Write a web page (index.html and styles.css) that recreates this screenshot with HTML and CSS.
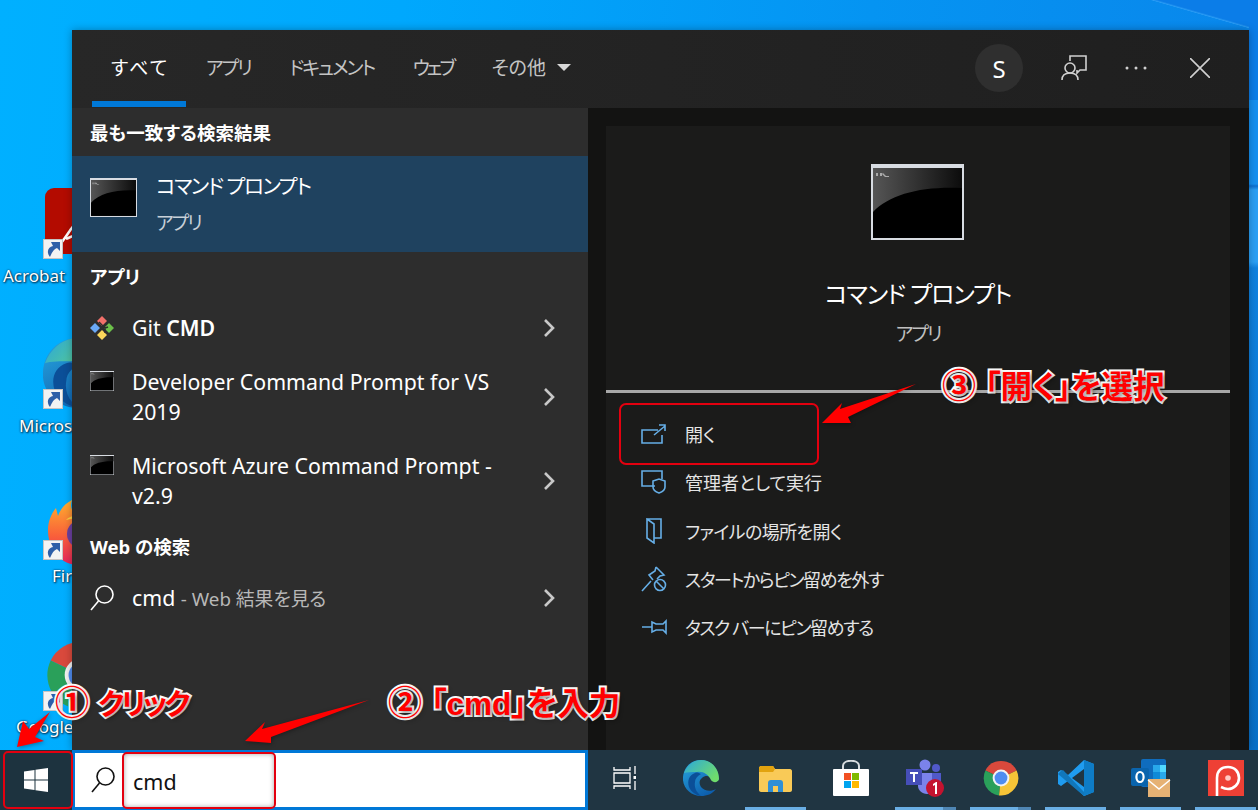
FILE: index.html

```html
<!DOCTYPE html>
<html lang="ja">
<head>
  <meta charset="UTF-8" />
  <title>コマンド プロンプトの開き方</title>
  <meta name="viewport" content="width=device-width, initial-scale=1.0" />
  <link rel="stylesheet" href="styles.css">
</head>
<body>

<svg class="sprites" aria-hidden="true">
  <defs>
    <linearGradient id="cmdShine" x1="0" y1="0" x2="1" y2="0">
      <stop offset="0" stop-color="#565656" />
      <stop offset="1" stop-color="#0c0c0c" />
    </linearGradient>
    <linearGradient id="edgeBlue" x1="0" y1="0" x2="0.6" y2="1">
      <stop offset="0" stop-color="#29a8e0" />
      <stop offset="1" stop-color="#0d5fae" />
    </linearGradient>
    <linearGradient id="edgeTop" x1="0" y1="0" x2="1" y2="0.6">
      <stop offset="0" stop-color="#2aa7dd" />
      <stop offset="1" stop-color="#6fdc6c" />
    </linearGradient>
    <linearGradient id="foxBody" x1="0" y1="0" x2="0" y2="1">
      <stop offset="0" stop-color="#ffb02e" />
      <stop offset="0.55" stop-color="#f9603a" />
      <stop offset="1" stop-color="#e5225c" />
    </linearGradient>
    <symbol id="cmd" viewBox="0 0 93 76" preserveAspectRatio="none">
      <rect width="93" height="76" fill="#d8dce2" />
      <rect x="2" y="4" width="89" height="70" fill="#000" />
      <path d="M2 4h89v20c-40-2-72 6-89 24z" fill="url(#cmdShine)" />
      <path d="M5 9h2v3H5zM9 9h2v3H9zM12 9l3 3h3v1h-4l-3-3z" fill="#aaa" />
    </symbol>
    <symbol id="edge" viewBox="0 0 36 36">
      <path d="M18 0C8 0 1 7 0 17c-1 11 8 19 18 19 6 0 11-2 15-7-5 3-12 2-15-2-2-3-2-7 1-9 3-3 8-2 10 0 2 1 2 3 7 2 0-11-8-20-18-20z" fill="url(#edgeBlue)" />
      <path d="M1 13C4 5 11 0 18 0c10 0 18 8 18 19-1 4-6 4-8 1-3-6-8-9-14-8-5 0-10 0-13 1z" fill="url(#edgeTop)" />
      <path d="M12 13c-6 2-8 8-6 14 2 5 7 8 12 9-5-4-7-9-6-14 0-3 2-6 6-8-2-1-4-2-6-1z" fill="#0b4f98" />
    </symbol>
    <symbol id="chrome" viewBox="0 0 36 36">
      <path d="M18 18L33.6 10.5A17.5 17.5 0 0 0 2.4 10.5z" fill="#d9493c" />
      <path d="M18 18L2.4 10.5A17.5 17.5 0 0 0 16 35.4z" fill="#2aa05a" />
      <path d="M18 18L16 35.4A17.5 17.5 0 0 0 33.6 10.5z" fill="#f6c437" />
      <circle cx="18" cy="18" r="8.4" fill="#f2f2f2" />
      <circle cx="18" cy="18" r="6.4" fill="#4f8cf0" />
    </symbol>
    <symbol id="shortcut" viewBox="0 0 20 20">
      <rect x="0.5" y="0.5" width="19" height="19" fill="#f3f3f3" stroke="#c4c4c4" />
      <path d="M7 18C3 13 5 8 10 7L8 3h9v9l-3-3c-3 1-5 4-7 9z" fill="#2d5fa8" />
    </symbol>
  </defs>
</svg>

<div class="desktop">
  <div class="wall-streak"></div>
  <div class="edge-strip"></div>

  <!-- shortcuts sit under the search window -->
  <div class="shortcut shortcut-acrobat">
    <svg class="app-art" viewBox="0 0 70 66"><rect width="70" height="66" rx="9" fill="#b30b00" /><path d="M10 62c6-6 10-12 14-18 3-4 4-8 10-8 4 0 3 5-1 9-4 3-8 4-12 6" fill="none" stroke="#fff" stroke-width="2.5" /></svg>
    <svg class="arrow-badge"><use href="#shortcut" /></svg>
    <span class="shortcut-label">Acrobat</span>
  </div>
  <div class="shortcut shortcut-edge">
    <svg class="app-art"><use href="#edge" /></svg>
    <svg class="arrow-badge"><use href="#shortcut" /></svg>
    <span class="shortcut-label">Micros</span>
  </div>
  <div class="shortcut shortcut-firefox">
    <svg class="app-art" viewBox="0 0 70 70"><path d="M0 30C0 22 3 14 8 8l2 8c2-6 6-12 14-16-2 6-1 10 3 13 18-2 33 10 33 28 0 14-12 24-30 24C12 65 0 48 0 30z" fill="url(#foxBody)" /><circle cx="33" cy="34" r="14" fill="#6b3fa0" /><path d="M18 20c6-6 18-7 24-2-8-1-16 0-24 2z" fill="#ffd23e" /></svg>
    <svg class="arrow-badge"><use href="#shortcut" /></svg>
    <span class="shortcut-label">Fir</span>
  </div>
  <div class="shortcut shortcut-chrome">
    <svg class="app-art"><use href="#chrome" /></svg>
    <svg class="arrow-badge"><use href="#shortcut" /></svg>
    <span class="shortcut-label">Google</span>
  </div>

  <section class="search-window">
    <header class="tabs">
      <nav class="tab-list">
        <span class="tab active">すべて</span>
        <span class="tab kana">アプリ</span>
        <span class="tab kana-doc">ドキュメント</span>
        <span class="tab kana-web">ウェブ</span>
        <span class="tab">その他<i class="caret"></i></span>
      </nav>
      <div class="tab-tools">
        <span class="avatar">S</span>
        <svg class="tool-icon feedback" viewBox="0 0 26 26"><path d="M9 6V1h16v14h-6l-3 3v-3" /><circle cx="9" cy="13" r="5" /><path d="M1 25c0-5 3-7 8-7s8 2 8 7" /></svg>
        <svg class="tool-icon dots" viewBox="0 0 22 4"><circle cx="2" cy="2" r="1.5" /><circle cx="11" cy="2" r="1.5" /><circle cx="20" cy="2" r="1.5" /></svg>
        <svg class="tool-icon close" viewBox="0 0 20 20"><path d="M0 0l20 20M20 0L0 20" /></svg>
      </div>
    </header>

    <div class="panes">
      <div class="results">
        <h2 class="group-title">最も一致する検索結果</h2>
        <div class="best-match">
          <svg class="cmd-medium"><use href="#cmd" /></svg>
          <div>
            <div class="best-name">コマンド プロンプト</div>
            <div class="best-kind">アプリ</div>
          </div>
        </div>

        <h2 class="group-title">アプリ</h2>
        <div class="result git-row">
          <svg class="result-icon" viewBox="0 0 24 24">
            <path d="M12 0l5 5-5 5-5-5z" fill="#f2706a" />
            <path d="M19 7l5 5-5 5-5-5z" fill="#6cc04a" />
            <path d="M12 14l5 5-5 5-5-5z" fill="#fbd75b" />
            <path d="M5 7l5 5-5 5-5-5z" fill="#6aa8f7" />
            <path d="M9 6l6 6v5M15 12l3-1" fill="none" stroke="#2d2d2d" stroke-width="1.4" />
          </svg>
          <span class="result-text">Git <b>CMD</b></span>
          <svg class="chevron" viewBox="0 0 12 18"><path d="M2 1l8 8-8 8" /></svg>
        </div>
        <div class="result">
          <svg class="result-icon cmd-small"><use href="#cmd" /></svg>
          <span class="result-text">Developer Command Prompt for VS 2019</span>
          <svg class="chevron" viewBox="0 0 12 18"><path d="M2 1l8 8-8 8" /></svg>
        </div>
        <div class="result">
          <svg class="result-icon cmd-small"><use href="#cmd" /></svg>
          <span class="result-text">Microsoft Azure Command Prompt - v2.9</span>
          <svg class="chevron" viewBox="0 0 12 18"><path d="M2 1l8 8-8 8" /></svg>
        </div>

        <h2 class="group-title web-title">Web の検索</h2>
        <div class="result one-line">
          <svg class="result-icon lens" viewBox="0 0 24 26"><circle cx="14.5" cy="9.5" r="8.5" /><path d="M8.5 16L1 25" /></svg>
          <span class="result-text">cmd <span class="web-hint">- Web 結果を見る</span></span>
          <svg class="chevron" viewBox="0 0 12 18"><path d="M2 1l8 8-8 8" /></svg>
        </div>
      </div>

      <div class="detail">
        <div class="detail-card">
          <div class="detail-head">
            <svg class="cmd-large"><use href="#cmd" /></svg>
            <div class="detail-name">コマンド プロンプト</div>
            <div class="detail-kind">アプリ</div>
          </div>
          <ul class="actions">
            <li class="action">
              <svg class="action-icon" viewBox="0 0 26 26"><path d="M17 9H1v13h20v-8M13 14L24 5M18 4h6v6" /></svg>
              開く
            </li>
            <li class="action">
              <svg class="action-icon" viewBox="0 0 26 24"><path d="M14 16H1V1h20v8" /><path d="M12 11l6-2 6 2v6c0 3-3 5-6 6-3-1-6-3-6-6z" /></svg>
              管理者として実行
            </li>
            <li class="action tight">
              <svg class="action-icon" viewBox="0 0 26 26"><path d="M6 1h14v19h-7M6 1l7 5v19l-7-5z" /></svg>
              ファイルの場所を開く
            </li>
            <li class="action tighter">
              <svg class="action-icon" viewBox="0 0 26 26"><path d="M15 1l8 8-4 1-3 3M15 1l-1 4-6 4 4 5M1 25l9-10" /><circle cx="19" cy="19" r="5.5" /><path d="M15 15l8 8" /></svg>
              スタートからピン留めを外す
            </li>
            <li class="action tighter">
              <svg class="action-icon" viewBox="0 0 26 16"><path d="M1 8h10M11 3v10l4-2h7l3 3V2l-3 3h-7z" /></svg>
              タスク バーにピン留めする
            </li>
          </ul>
        </div>
      </div>
    </div>
  </section>

  <footer class="taskbar">
    <div class="start-button">
      <svg class="win-logo" viewBox="0 0 24 24"><path d="M0 3.5L10.5 2v9.5H0zM11.5 1.8L24 0v11.5H11.5zM0 12.5h10.5V22L0 20.5zM11.5 12.5H24V24l-12.5-1.8z" /></svg>
    </div>
    <div class="search-box">
      <svg class="box-lens" viewBox="0 0 24 26"><circle cx="14.5" cy="9.5" r="8.5" /><path d="M8.5 16L1 25" /></svg>
      <span class="box-query">cmd</span>
    </div>
    <div class="task-items">
      <div class="task-item">
        <svg class="task-view" viewBox="0 0 24 24"><path d="M2 1v3h16V1M2 7h16v10H2zM2 23v-3h16v3M23 0v8M23 15v9" /><path d="M21.5 10h3v3h-3z" fill="#fff" stroke="none" /></svg>
      </div>
      <div class="task-item">
        <svg class="task-art"><use href="#edge" /></svg>
      </div>
      <div class="task-item running">
        <svg class="task-art folder" viewBox="2 2 33 27"><path d="M2 5c0-1 1-2 2-2h12l2 3h15c1 0 2 1 2 2v19c0 1-1 2-2 2H4c-1 0-2-1-2-2z" fill="#f9ca57" /><path d="M2 5c0-1 1-2 2-2h12l2 3-2 3H2z" fill="#e2a30f" /><path d="M11 20c0-2 1-3 3-3h9c2 0 3 1 3 3v9h-5v-6h-5v6h-5z" fill="#2f8fd6" /></svg>
      </div>
      <div class="task-item">
        <svg class="task-art" viewBox="0 0 36 36"><path d="M10 10V6c0-7 16-7 16 0v4" fill="none" stroke="#d8dde0" stroke-width="2" /><rect y="9" width="36" height="27" rx="1" fill="#fff" /><rect x="11" y="13" width="7" height="7" fill="#f25022" /><rect x="19" y="13" width="7" height="7" fill="#7fba00" /><rect x="11" y="21" width="7" height="7" fill="#00a4ef" /><rect x="19" y="21" width="7" height="7" fill="#ffb900" /></svg>
      </div>
      <div class="task-item running split">
        <svg class="task-art teams" viewBox="0 0 40 38"><circle cx="19" cy="6" r="5.5" fill="#7b83eb" /><circle cx="30" cy="9" r="4" fill="#5059c9" /><path d="M12 14h16v14c0 4-3 7-7 7-5 0-9-4-9-8z" fill="#7b83eb" /><path d="M26 14h9v10l-9 4z" fill="#5059c9" /><rect y="10" width="16" height="16" fill="#464eb8" /><path d="M4 13h8v2H9v8H7v-8H4z" fill="#fff" /><circle cx="29" cy="29" r="9" fill="#c4132f" /><path d="M27 25l3-2h1v12h-2V26l-2 1z" fill="#fff" /></svg>
      </div>
      <div class="task-item running split">
        <svg class="task-art"><use href="#chrome" /></svg>
      </div>
      <div class="task-item running">
        <svg class="task-art" viewBox="0 0 36 36"><path d="M26 0l10 4v28l-10 4-16-15-7 5-3-2v-12l3-2 7 5z" fill="#1f9cf0" /><path d="M26 0v36l10-4V4z" fill="#0e7cc6" /><path d="M26 9L14 18l12 9z" fill="#203542" /><path d="M3 11l2-1 21 22v4L0 14z" fill="#1177bb" /></svg>
      </div>
      <div class="task-item running">
        <svg class="task-art outlook" viewBox="0 0 40 38"><rect x="10" y="0" width="25" height="28" rx="2" fill="#0f6cbd" /><rect x="22" y="6" width="7" height="7" fill="#28a8ea" /><rect x="29" y="6" width="6" height="7" fill="#50d9ff" /><rect x="22" y="13" width="7" height="7" fill="#0f8ad8" /><rect x="29" y="13" width="6" height="7" fill="#28a8ea" /><rect y="9" width="18" height="18" rx="2" fill="#0a64ad" /><ellipse cx="9" cy="18" rx="3.6" ry="5" fill="none" stroke="#fff" stroke-width="2.2" /><rect x="17" y="20" width="22" height="18" fill="#e6b274" /><path d="M17 21l11 9 11-9" fill="none" stroke="#fff" stroke-width="1.5" /></svg>
      </div>
      <div class="task-item running">
        <svg class="task-art" viewBox="0 0 36 36"><rect width="36" height="36" fill="#ee4035" /><path d="M9 36V18C9 11 13 7 20 7c7 0 11 5 11 11s-5 11-11 11c-3 0-5-1-7-2" fill="none" stroke="#fff" stroke-width="2.6" /><circle cx="20" cy="18" r="2.8" fill="#ffc9c4" /></svg>
      </div>
    </div>
  </footer>

  <!-- red call-outs drawn over the screenshot -->
  <div class="mark mark-start"></div>
  <div class="mark mark-query"></div>
  <div class="mark mark-open"></div>
  <svg class="arrows" viewBox="0 0 1258 810">
    <path d="M17 747L23 721 29 729 50 712 35 737 44 741z" />
    <path d="M245 741L265 722 262 729 369 700 271 737 271 743z" />
    <path d="M822 423L842 403 840 409 916 384 848 417 851 423z" />
  </svg>
  <div class="note note-one"><span class="note-num">①</span><span class="note-click">クリック</span></div>
  <div class="note note-two"><span class="note-num">②</span> 「cmd」を入力</div>
  <div class="note note-three"><span class="note-num">③</span> 「開く」を選択</div>
</div>

</body>
</html>
```

FILE: styles.css

```css
html, body {
  margin: 0;
  padding: 0;
  height: 100%;
  overflow: hidden;
}
body {
  font-family: "Noto Sans", "Noto Sans CJK JP", sans-serif;
  font-feature-settings: "palt";
  color: #fff;
}
.sprites {
  position: absolute;
  width: 0;
  height: 0;
}

.desktop {
  position: relative;
  width: 1258px;
  height: 810px;
  overflow: hidden;
  display: flex;
  flex-direction: column;
  background: linear-gradient(96deg, #00b0ff 0%, #00a8fd 30%, #0594f2 65%, #0a84ea 100%);
}
.wall-streak {
  position: absolute;
  top: 0;
  right: 0;
  width: 108px;
  height: 30px;
  background: linear-gradient(16deg, transparent 49%, #2a9cf4 50%, #0b7de8 53%);
}
.edge-strip {
  position: absolute;
  top: 0;
  right: 0;
  width: 9px;
  height: 750px;
  background: linear-gradient(180deg, #0b7de8 0, #0b7de8 100px, #1590f0 100px, #1590f0 184px, #0c6fd0 186px, #2aa0f5 190px, #2aa0f5 262px, #0f82e0 268px, #0870c8 750px);
}

/* desktop shortcuts */
.shortcut {
  position: absolute;
  left: 0;
  width: 72px;
  height: 100px;
  overflow: hidden;
}
.shortcut-acrobat { top: 188px; }
.shortcut-edge { top: 338px; }
.shortcut-firefox { top: 490px; }
.shortcut-chrome { top: 640px; }
.app-art {
  position: absolute;
  left: 43px;
  top: 0;
  width: 70px;
  height: 70px;
}
.shortcut-acrobat .app-art { left: 45px; height: 66px; }
.shortcut-firefox .app-art { left: 48px; top: 10px; }
.shortcut-chrome .app-art { left: 46px; }
.arrow-badge {
  position: absolute;
  left: 43px;
  top: 51px;
  width: 20px;
  height: 20px;
}
.shortcut-firefox .arrow-badge { top: 50px; }
.shortcut-label {
  position: absolute;
  top: 76px;
  font-family: "Noto Sans", sans-serif;
  font-size: 17px;
  line-height: 24px;
  white-space: nowrap;
  text-shadow: 1px 1px 2px #002a4a, 0 0 2px #002a4a;
}
.shortcut-acrobat .shortcut-label { left: 3px; }
.shortcut-edge .shortcut-label { left: 19px; }
.shortcut-firefox .shortcut-label { left: 52px; top: 74px; }
.shortcut-chrome .shortcut-label { left: 16px; top: 75px; }

/* search window */
.search-window {
  position: relative;
  margin: 30px 9px 0 72px;
  flex: 1;
  min-height: 0;
  display: flex;
  flex-direction: column;
  box-shadow: 0 0 8px rgba(0,0,0,0.3);
}
.tabs {
  height: 78px;
  display: flex;
  justify-content: space-between;
  background: linear-gradient(90deg, #272727, #1f1f1f);
}
.tab-list {
  display: flex;
  gap: 0.5px;
  padding-left: 20px;
}
.tab {
  display: flex;
  align-items: center;
  height: 68px;
  padding: 3px 19px 0;
  font-size: 19px;
  color: #c4c4c4;
}
.tab.kana { letter-spacing: -2px; }
.tab.kana-doc { letter-spacing: -2px; }
.tab.kana-web { letter-spacing: -3px; }
.tab.active {
  color: #fff;
  font-feature-settings: normal;
  letter-spacing: 1.5px;
  padding: 3px 17px 0 18px;
  border-bottom: 6px solid #0078d7;
}
.caret {
  width: 0;
  height: 0;
  margin-left: 11px;
  border-left: 7px solid transparent;
  border-right: 7px solid transparent;
  border-top: 7px solid #d8d8d8;
}
.tab-tools {
  display: flex;
  align-items: center;
  padding: 0 39px 0 0;
  height: 76px;
}
.avatar {
  width: 48px;
  height: 48px;
  border-radius: 50%;
  background: #2f2f2f;
  display: flex;
  align-items: center;
  justify-content: center;
  font-size: 24px;
  margin-right: 38px;
}
.tool-icon {
  fill: none;
  stroke: #d0d0d0;
  stroke-width: 1.6;
}
.feedback { width: 26px; height: 26px; margin-right: 38px; }
.dots { width: 22px; height: 4px; margin-right: 43px; fill: #d0d0d0; stroke: none; }
.close { width: 20px; height: 20px; }

.panes {
  flex: 1;
  min-height: 0;
  display: flex;
}
.results {
  width: 516px;
  flex: none;
  background: #2d2d2d;
}
.group-title {
  margin: 0;
  height: 48px;
  display: flex;
  align-items: center;
  padding-left: 18px;
  font-size: 18.5px;
  font-weight: 700;
}
.web-title {
  box-sizing: border-box;
  padding-bottom: 3px;
}
.best-match {
  height: 96px;
  display: flex;
  align-items: center;
  gap: 19px;
  padding-left: 18px;
  background: #1f425f;
}
.cmd-medium { width: 47px; height: 39px; margin-bottom: 13px; }
.best-name { font-size: 20.5px; line-height: 36px; letter-spacing: -1.4px; }
.best-kind { font-size: 19px; line-height: 36px; letter-spacing: -2px; color: #c8d0d8; padding-top: 1px; }

.result {
  height: 84px;
  display: flex;
  align-items: center;
  padding-left: 18px;
}
.result.git-row { height: 55px; }
.result.one-line { height: 54px; }
.result-icon { width: 24px; height: 24px; margin-right: 18px; flex: none; }
.cmd-small { height: 20px; align-self: flex-start; margin-top: 16px; }
.lens { fill: none; stroke: #fff; stroke-width: 1.6; height: 26px; }
.result-text {
  width: 410px;
  box-sizing: border-box;
  padding-right: 41px;
  font-size: 21.3px;
  line-height: 30px;
}
.result-text b { font-weight: 600; }
.web-hint { font-size: 18.8px; color: #b8b8b8; }
.chevron {
  width: 14px;
  height: 18px;
  fill: none;
  stroke: #c8c8c8;
  stroke-width: 2.6;
}

.detail {
  flex: 1;
  background: #131312;
  padding: 18px 19px 0 18px;
  display: flex;
}
.detail-card {
  flex: 1;
  background: #1b1b1a;
}
.detail-head {
  height: 267px;
  box-sizing: border-box;
  padding-top: 38px;
  display: flex;
  flex-direction: column;
  align-items: center;
  border-bottom: 3px solid #a8a8a8;
}
.cmd-large { width: 93px; height: 76px; margin: 0 1px 34px 0; }
.detail-name { font-size: 24px; line-height: 40px; letter-spacing: -1.1px; }
.detail-kind { font-size: 19px; line-height: 36px; letter-spacing: -2px; color: #c0c0c0; padding-top: 2px; }
.actions {
  list-style: none;
  margin: 17px 0 0;
  padding: 0;
}
.action {
  display: flex;
  align-items: center;
  height: 48.3px;
  padding-left: 35px;
  font-size: 18px;
  color: #e4e4e4;
}
.action.tight { letter-spacing: -0.6px; }
.action.tighter { letter-spacing: -1.4px; }
.action-icon {
  width: 26px;
  height: 26px;
  margin-right: 18px;
  flex: none;
  fill: none;
  stroke: #66aee6;
  stroke-width: 1.6;
}

/* taskbar */
.taskbar {
  height: 60px;
  flex: none;
  display: flex;
  position: relative;
  background: #203542;
}
.start-button {
  width: 72px;
  flex: none;
  display: flex;
  align-items: center;
  justify-content: center;
  background: #1d333f;
}
.win-logo { width: 24px; height: 24px; fill: #fff; }
.search-box {
  width: 516px;
  box-sizing: border-box;
  flex: none;
  height: 60px;
  display: flex;
  align-items: center;
  background: #fff;
  border: 3px solid #0078d7;
  padding-left: 16px;
}
.box-lens {
  width: 24px;
  height: 26px;
  fill: none;
  stroke: #111;
  stroke-width: 1.6;
  margin-right: 18px;
}
.box-query { font-size: 21.5px; color: #111; padding-top: 2px; }
.task-items { display: flex; }
.task-item {
  width: 75px;
  height: 60px;
  flex: none;
  display: flex;
  align-items: center;
  justify-content: center;
  position: relative;
  padding-bottom: 4px;
  box-sizing: border-box;
}
.task-item.running::after {
  content: "";
  position: absolute;
  left: 7px;
  right: 7px;
  bottom: 0;
  height: 3px;
  background: #69aee4;
}
.task-item.split::before {
  content: "";
  position: absolute;
  right: 7px;
  width: 13px;
  bottom: 0;
  height: 3px;
  background: #4f86b4;
  z-index: 1;
}
.task-art { width: 36px; height: 36px; }
.task-art.folder { width: 33px; height: 27px; }
.teams, .outlook { width: 40px; height: 38px; }
.task-view {
  width: 24px;
  height: 24px;
  margin-right: 3px;
  fill: none;
  stroke: #fff;
  stroke-width: 1.3;
}

/* call-outs */
.mark {
  position: absolute;
  box-sizing: border-box;
  border: 2px solid #e3000f;
  border-radius: 5px;
}
.mark-start { left: 3px; top: 751px; width: 70px; height: 58px; }
.mark-query { left: 122px; top: 752px; width: 154px; height: 57px; box-shadow: inset 0 0 5px rgba(0,0,0,0.35); }
.mark-open { left: 619px; top: 403px; width: 200px; height: 62px; border-radius: 7px; }
.arrows {
  position: absolute;
  left: 0;
  top: 0;
  width: 1258px;
  height: 810px;
  fill: #ff0000;
  filter: drop-shadow(1px 1px 2px rgba(0,0,0,0.35));
}
.note {
  position: absolute;
  font-family: "Liberation Sans", "Noto Sans CJK JP", sans-serif;
  font-size: 31.5px;
  font-weight: 700;
  line-height: 38px;
  white-space: nowrap;
  color: #ff0000;
  -webkit-text-stroke: 4px #fff;
  paint-order: stroke fill;
  text-shadow: 2px 2px 4px rgba(0,0,0,0.45);
}
.note-num { font-size: 34px; }
.note-click {
  margin-left: 9px;
  font-size: 29px;
  letter-spacing: -3px;
}
.note-one { left: 55px; top: 684px; }
.note-two { left: 388px; top: 684px; }
.note-three { left: 942px; top: 367px; }
```
